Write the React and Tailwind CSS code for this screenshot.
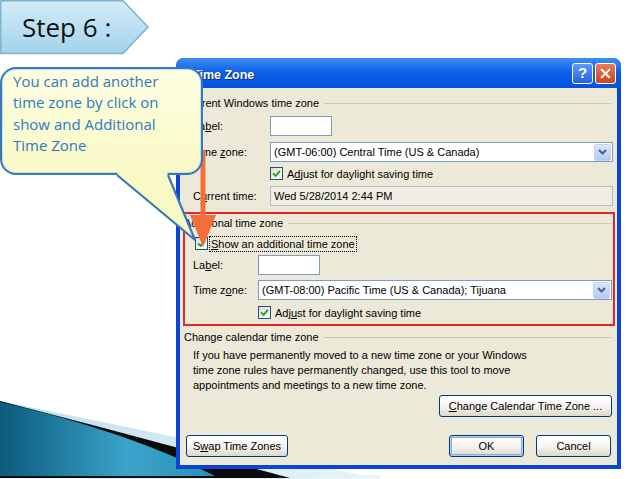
import React from 'react';

const ui = "font-['Liberation_Sans',Arial,sans-serif] text-[11px] leading-[14px] text-black";

function Check() {
  return (
    <span className="flex h-[13px] w-[13px] shrink-0 items-center justify-center border border-[#1c5180] bg-gradient-to-br from-[#dcdcd7] to-white">
      <svg viewBox="0 0 9 9" className="h-[9px] w-[9px]">
        <path d="M1 4.3 L3.6 6.9 L8 1.8" fill="none" stroke="#21a121" strokeWidth="1.8" />
      </svg>
    </span>
  );
}

function GroupHeader({ children, className = '' }) {
  return (
    <div className={`flex h-[14px] items-center gap-[5px] ${className}`}>
      <span className="whitespace-nowrap">{children}</span>
      <span className="mr-[2px] h-0 flex-1 border-t border-[#cbc7b8]" />
    </div>
  );
}

function Combo({ value, className = '' }) {
  return (
    <div className={`flex h-[20px] items-center border border-[#7f9db9] bg-white pl-[3px] pr-px ${className}`}>
      <span className="flex-1 truncate">{value}</span>
      <span className="flex h-[17px] w-[17px] items-center justify-center rounded-[2px] border border-[#c3d3fd] bg-gradient-to-b from-[#dce6fd] to-[#b4c8f6]">
        <svg viewBox="0 0 9 6" className="h-[6px] w-[9px]">
          <path d="M1 1 L4.5 4.5 L8 1" fill="none" stroke="#4d6185" strokeWidth="2" />
        </svg>
      </span>
    </div>
  );
}

function Btn({ children, className = '', isDefault }) {
  return (
    <button
      type="button"
      className={`flex h-[22px] items-center justify-center rounded-[3px] border border-[#003c74] bg-gradient-to-b from-white via-[#f6f5f0] to-[#dcd8cc] ${
        isDefault ? 'shadow-[inset_0_0_0_1px_#b4ccf4,inset_0_0_0_2px_#8aaeea]' : ''
      } ${className}`}
    >
      {children}
    </button>
  );
}

function Dialog() {
  return (
    <div className={`absolute left-[176px] top-[58px] flex h-[411px] w-[445px] flex-col overflow-hidden rounded-t-[8px] bg-[#0a45d6] ${ui}`}>
      <div className="flex h-[30px] shrink-0 items-center bg-gradient-to-b from-[#3d8df8] via-[#0a5de6] to-[#0653db] pl-[16px] pr-[5px]">
        <span className="flex-1 pt-[3px] text-[12.5px] font-bold text-white [text-shadow:1px_1px_0_#0a2e8a]">Time Zone</span>
        <div className="flex gap-[2px]">
          <span className="flex h-[21px] w-[21px] items-center justify-center rounded-[3px] border border-white bg-gradient-to-b from-[#5c9bf7] to-[#2460e0] text-[15px] font-bold text-white">
            ?
          </span>
          <span className="flex h-[21px] w-[21px] items-center justify-center rounded-[3px] border border-white bg-gradient-to-b from-[#ec7b59] to-[#c9451b]">
            <svg viewBox="0 0 12 12" className="h-[11px] w-[11px]">
              <path d="M2 2 L10 10 M10 2 L2 10" stroke="white" strokeWidth="2.2" strokeLinecap="square" />
            </svg>
          </span>
        </div>
      </div>

      <div className="mx-[4px] mb-[4px] flex flex-1 flex-col bg-[#ece9d8] px-[4px]">
        <GroupHeader className="mt-[8px]">Current Windows time zone</GroupHeader>
        <div className="mt-[6px] flex h-[20px] items-center">
          <span className="w-[86px] pl-[9px]">
            La<u>b</u>el:
          </span>
          <div className="h-[20px] w-[62px] border border-[#7f9db9] bg-white" />
        </div>
        <div className="mt-[6px] flex h-[20px] items-center">
          <span className="w-[86px] shrink-0 pl-[9px]">
            Time <u>z</u>one:
          </span>
          <Combo className="flex-1" value="(GMT-06:00) Central Time (US & Canada)" />
        </div>
        <div className="mt-[5px] flex h-[13px] items-center pl-[86px]">
          <Check />
          <span className="pl-[4px]">
            A<u>d</u>just for daylight saving time
          </span>
        </div>
        <div className="mt-[6px] flex h-[20px] items-center">
          <span className="w-[86px] shrink-0 pl-[9px]">
            C<u>u</u>rrent time:
          </span>
          <div className="flex h-[20px] flex-1 items-center border border-[#b5b9c0] bg-[#f0eee4] pl-[3px]">Wed 5/28/2014 2:44 PM</div>
        </div>

        <div className="relative mt-[10px]">
          <GroupHeader>Additional time zone</GroupHeader>
          <div className="mt-[7px] flex h-[13px] items-center pl-[11px]">
            <Check />
            <span className="ml-px border border-dotted border-black px-px leading-[14px]">
              <u>S</u>how an additional time zone
            </span>
          </div>
          <div className="mt-[5px] flex h-[20px] items-center">
            <span className="w-[74px] shrink-0 pl-[9px]">
              La<u>b</u>el:
            </span>
            <div className="h-[20px] w-[62px] border border-[#7f9db9] bg-white" />
          </div>
          <div className="mt-[5px] flex h-[20px] items-center">
            <span className="w-[74px] shrink-0 pl-[9px]">
              Time z<u>o</u>ne:
            </span>
            <Combo className="mr-px flex-1" value="(GMT-08:00) Pacific Time (US & Canada); Tijuana" />
          </div>
          <div className="mt-[6px] flex h-[13px] items-center pl-[74px]">
            <Check />
            <span className="pl-[4px]">
              Adj<u>u</u>st for daylight saving time
            </span>
          </div>
          <div className="pointer-events-none absolute -left-px -right-[2px] -top-[4px] bottom-[-7px] border-2 border-[#e3262a]" />
        </div>

        <GroupHeader className="mt-[11px]">Change calendar time zone</GroupHeader>
        <p className="mt-[4px] pl-[9px] leading-[15px]">
          If you have permanently moved to a new time zone or your Windows
          <br />
          time zone rules have permanently changed, use this tool to move
          <br />
          appointments and meetings to a new time zone.
        </p>
        <Btn className="mr-px mt-[2px] w-[173px] self-end">
          <span>
            <u>C</u>hange Calendar Time Zone ...
          </span>
        </Btn>
        <div className="mt-[18px] flex items-center">
          <Btn className="ml-[2px] w-[102px]">
            <span>
              S<u>w</u>ap Time Zones
            </span>
          </Btn>
          <div className="flex-1" />
          <Btn className="w-[75px]" isDefault>
            OK
          </Btn>
          <Btn className="ml-[12px] mr-[2px] w-[75px]">Cancel</Btn>
        </div>
      </div>
    </div>
  );
}

function Swoosh() {
  return (
    <svg width="420" height="84" className="absolute left-0 top-[395px]">
      <defs>
        <linearGradient id="swLight" x1="0" y1="0" x2="1" y2="0">
          <stop offset="0" stopColor="#bfe0ee" />
          <stop offset="1" stopColor="#e8f4f9" />
        </linearGradient>
        <linearGradient id="swTeal" x1="0" y1="0" x2="1" y2="0">
          <stop offset="0" stopColor="#0b5b7c" />
          <stop offset="0.6" stopColor="#3ba4ca" />
          <stop offset="1" stopColor="#2790b7" />
        </linearGradient>
      </defs>
      <rect x="0" y="80" width="380" height="4" fill="#e9f4f8" />
      <polygon points="0,6 376,83 0,83" fill="url(#swLight)" />
      <path d="M0 6 L100 32 L290 83 L0 83 Z" fill="#0b0b0b" />
      <path d="M0 7 Q130 37 215 81 L0 81 Z" fill="url(#swTeal)" />
    </svg>
  );
}

function OrangeArrow() {
  return (
    <svg width="35" height="100" className="absolute left-[185px] top-[150px]">
      <line x1="18" y1="0" x2="18" y2="70" stroke="#f36e38" strokeWidth="5" />
      <polygon points="5,65 31,65 18,97" fill="#f36e38" />
    </svg>
  );
}

function Callout() {
  return (
    <>
      <div className="absolute left-0 top-[67px] h-[108px] w-[203px] rounded-[16px] border-2 border-[#3878b8] bg-gradient-to-b from-[#fefee2] to-[#f9f9c6] pl-[11px] pt-[2px] font-['Open_Sans',sans-serif] text-[15px] leading-[21.3px] text-[#2e7bbd] shadow-[inset_0_0_0_1px_#bfe3f5]">
        You can add another
        <br />
        time zone by click on
        <br />
        show and Additional
        <br />
        Time Zone
      </div>
      <svg width="95" height="80" className="absolute left-[110px] top-[165px]">
        <polygon points="9,5 56,5 58,10 85,75 7,10" fill="#f9f9c6" />
        <polyline points="7,10 85,75 58,10" fill="none" stroke="#3878b8" strokeWidth="2.2" strokeLinejoin="miter" />
      </svg>
    </>
  );
}

function StepBanner() {
  return (
    <>
      <svg width="152" height="58" className="absolute left-0 top-0">
        <defs>
          <linearGradient id="stepFill" x1="0" y1="0" x2="0" y2="1">
            <stop offset="0" stopColor="#d4ecf7" />
            <stop offset="1" stopColor="#a2d3ec" />
          </linearGradient>
        </defs>
        <path d="M0.8 0.8 H123 L148 27 L123 53.5 H0.8 Z" fill="url(#stepFill)" stroke="#7ab4d3" strokeWidth="1.5" strokeLinejoin="round" />
      </svg>
      <div className="absolute left-[22px] top-[8px] font-['Open_Sans',sans-serif] text-[26px] leading-[38px] text-[#111]">Step 6 :</div>
    </>
  );
}

export default function App() {
  return (
    <div className="relative h-[479px] w-[638px] overflow-hidden bg-white">
      <Swoosh />
      <Dialog />
      <OrangeArrow />
      <Callout />
      <StepBanner />
    </div>
  );
}
